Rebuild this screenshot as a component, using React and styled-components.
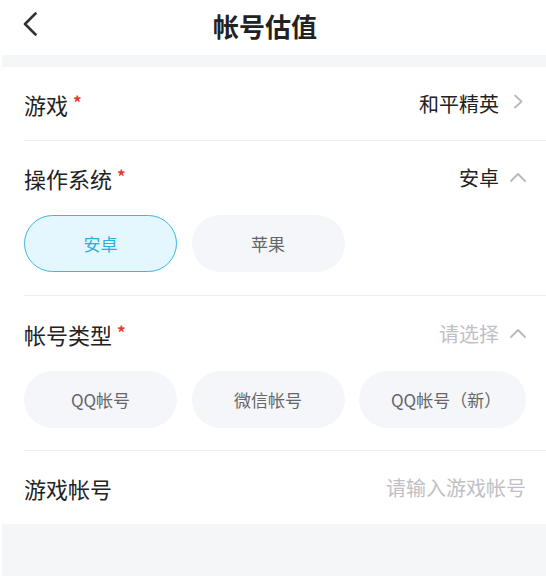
import React from 'react'
import styled, { createGlobalStyle, css } from 'styled-components'

const GlobalStyle = createGlobalStyle`
  * { box-sizing: border-box; }
  body {
    margin: 0;
    background: #fff;
    font-family: "Noto Sans CJK SC", "Noto Sans", sans-serif;
  }
`

const Page = styled.div`
  width: 546px;
  height: 576px;
  display: flex;
  flex-direction: column;
  overflow: hidden;
  background: #fff;
`

const Header = styled.div`
  height: 55px;
  flex-shrink: 0;
  display: flex;
  align-items: center;
  padding: 0 53px 4px 23px;
`

const BackButton = styled.button`
  border: 0;
  background: none;
  padding: 0;
  width: 14px;
  height: 24px;
  display: flex;
  margin-bottom: 4px;
  svg { display: block; }
`

const Title = styled.h1`
  flex: 1;
  margin: 0;
  text-align: center;
  font-size: 26px;
  line-height: 1;
  font-weight: 700;
  color: #222;
`

const Band = styled.div`
  height: 12px;
  flex-shrink: 0;
  margin-left: 2px;
  background: #f5f6f8;
`

const Section = styled.section`
  margin-left: 24px;
  padding-right: 20px;
  flex-shrink: 0;
  ${({ divided }) => divided && css`
    border-bottom: 1px solid #eeeff1;
  `}
  ${({ pad }) => pad && css`
    padding-bottom: ${pad}px;
  `}
`

const FieldRow = styled.div`
  height: ${({ h }) => h || 74}px;
  display: flex;
  align-items: center;
  justify-content: space-between;
`

const Label = styled.div`
  display: flex;
  align-items: flex-start;
  font-size: 22px;
  line-height: 1;
  color: #222;
`

const Star = styled.span`
  font-size: 17px;
  line-height: 1;
  font-weight: 700;
  color: #e53a2f;
  margin: 0 0 0 5px;
`

const Value = styled.div`
  display: flex;
  align-items: center;
  font-size: 20px;
  line-height: 1;
  color: ${({ muted }) => (muted ? '#c0c0c4' : '#222')};
`

const Arrow = styled.svg`
  width: 16px;
  height: 16px;
  margin-left: 11px;
  overflow: visible;
  flex-shrink: 0;
`

const Input = styled.input`
  flex: 1;
  border: 0;
  outline: none;
  background: none;
  padding: 0;
  text-align: right;
  font: inherit;
  font-size: 20px;
  color: #222;
  &::placeholder { color: #c0c0c4; }
`

const Chips = styled.div`
  display: flex;
  gap: 14.5px;
`

const Chip = styled.button`
  min-width: 153px;
  height: 57px;
  padding: 0 31px;
  border-radius: 29px;
  border: 1.5px solid transparent;
  background: #f5f6fa;
  font: inherit;
  font-size: 17px;
  color: #666;
  white-space: nowrap;
  ${({ active }) => active && css`
    background: #e5f7fe;
    border-color: #3bb8e2;
    color: #2aaedb;
  `}
`

const Footer = styled.div`
  flex: 1;
  margin-left: 2px;
  background: #f5f6f8;
`

const ChevronRight = () => (
  <Arrow viewBox="0 0 16 16">
    <path d="M5 -0.5 L11.5 5.5 L5 11.5" fill="none" stroke="#b8b8bd" strokeWidth="1.8" strokeLinecap="round" strokeLinejoin="round" />
  </Arrow>
)

const ChevronUp = () => (
  <Arrow viewBox="0 0 16 16">
    <path d="M1 11 L8 4 L15 11" fill="none" stroke="#b8b8bd" strokeWidth="1.8" strokeLinecap="round" strokeLinejoin="round" />
  </Arrow>
)

const systems = ['安卓', '苹果']
const accountTypes = ['QQ帐号', '微信帐号', 'QQ帐号（新）']

export default function App() {
  return (
    <Page>
      <GlobalStyle />
      <Header>
        <BackButton aria-label="返回">
          <svg width="14" height="24" viewBox="0 0 14 24">
            <path d="M12.5 1.5 L2 12 L12.5 22.5" fill="none" stroke="#333" strokeWidth="2.6" strokeLinecap="round" strokeLinejoin="round" />
          </svg>
        </BackButton>
        <Title>帐号估值</Title>
      </Header>
      <Band />

      <Section divided>
        <FieldRow h={73}>
          <Label>游戏<Star>*</Star></Label>
          <Value>和平精英<ChevronRight /></Value>
        </FieldRow>
      </Section>

      <Section divided pad={23}>
        <FieldRow>
          <Label>操作系统<Star>*</Star></Label>
          <Value>安卓<ChevronUp /></Value>
        </FieldRow>
        <Chips>
          {systems.map((s, i) => (
            <Chip key={s} active={i === 0}>{s}</Chip>
          ))}
        </Chips>
      </Section>

      <Section divided pad={22}>
        <FieldRow h={75}>
          <Label>帐号类型<Star>*</Star></Label>
          <Value muted>请选择<ChevronUp /></Value>
        </FieldRow>
        <Chips>
          {accountTypes.map((t) => (
            <Chip key={t}>{t}</Chip>
          ))}
        </Chips>
      </Section>

      <Section>
        <FieldRow h={73}>
          <Label>游戏帐号</Label>
          <Input placeholder="请输入游戏帐号" />
        </FieldRow>
      </Section>

      <Footer />
    </Page>
  )
}
